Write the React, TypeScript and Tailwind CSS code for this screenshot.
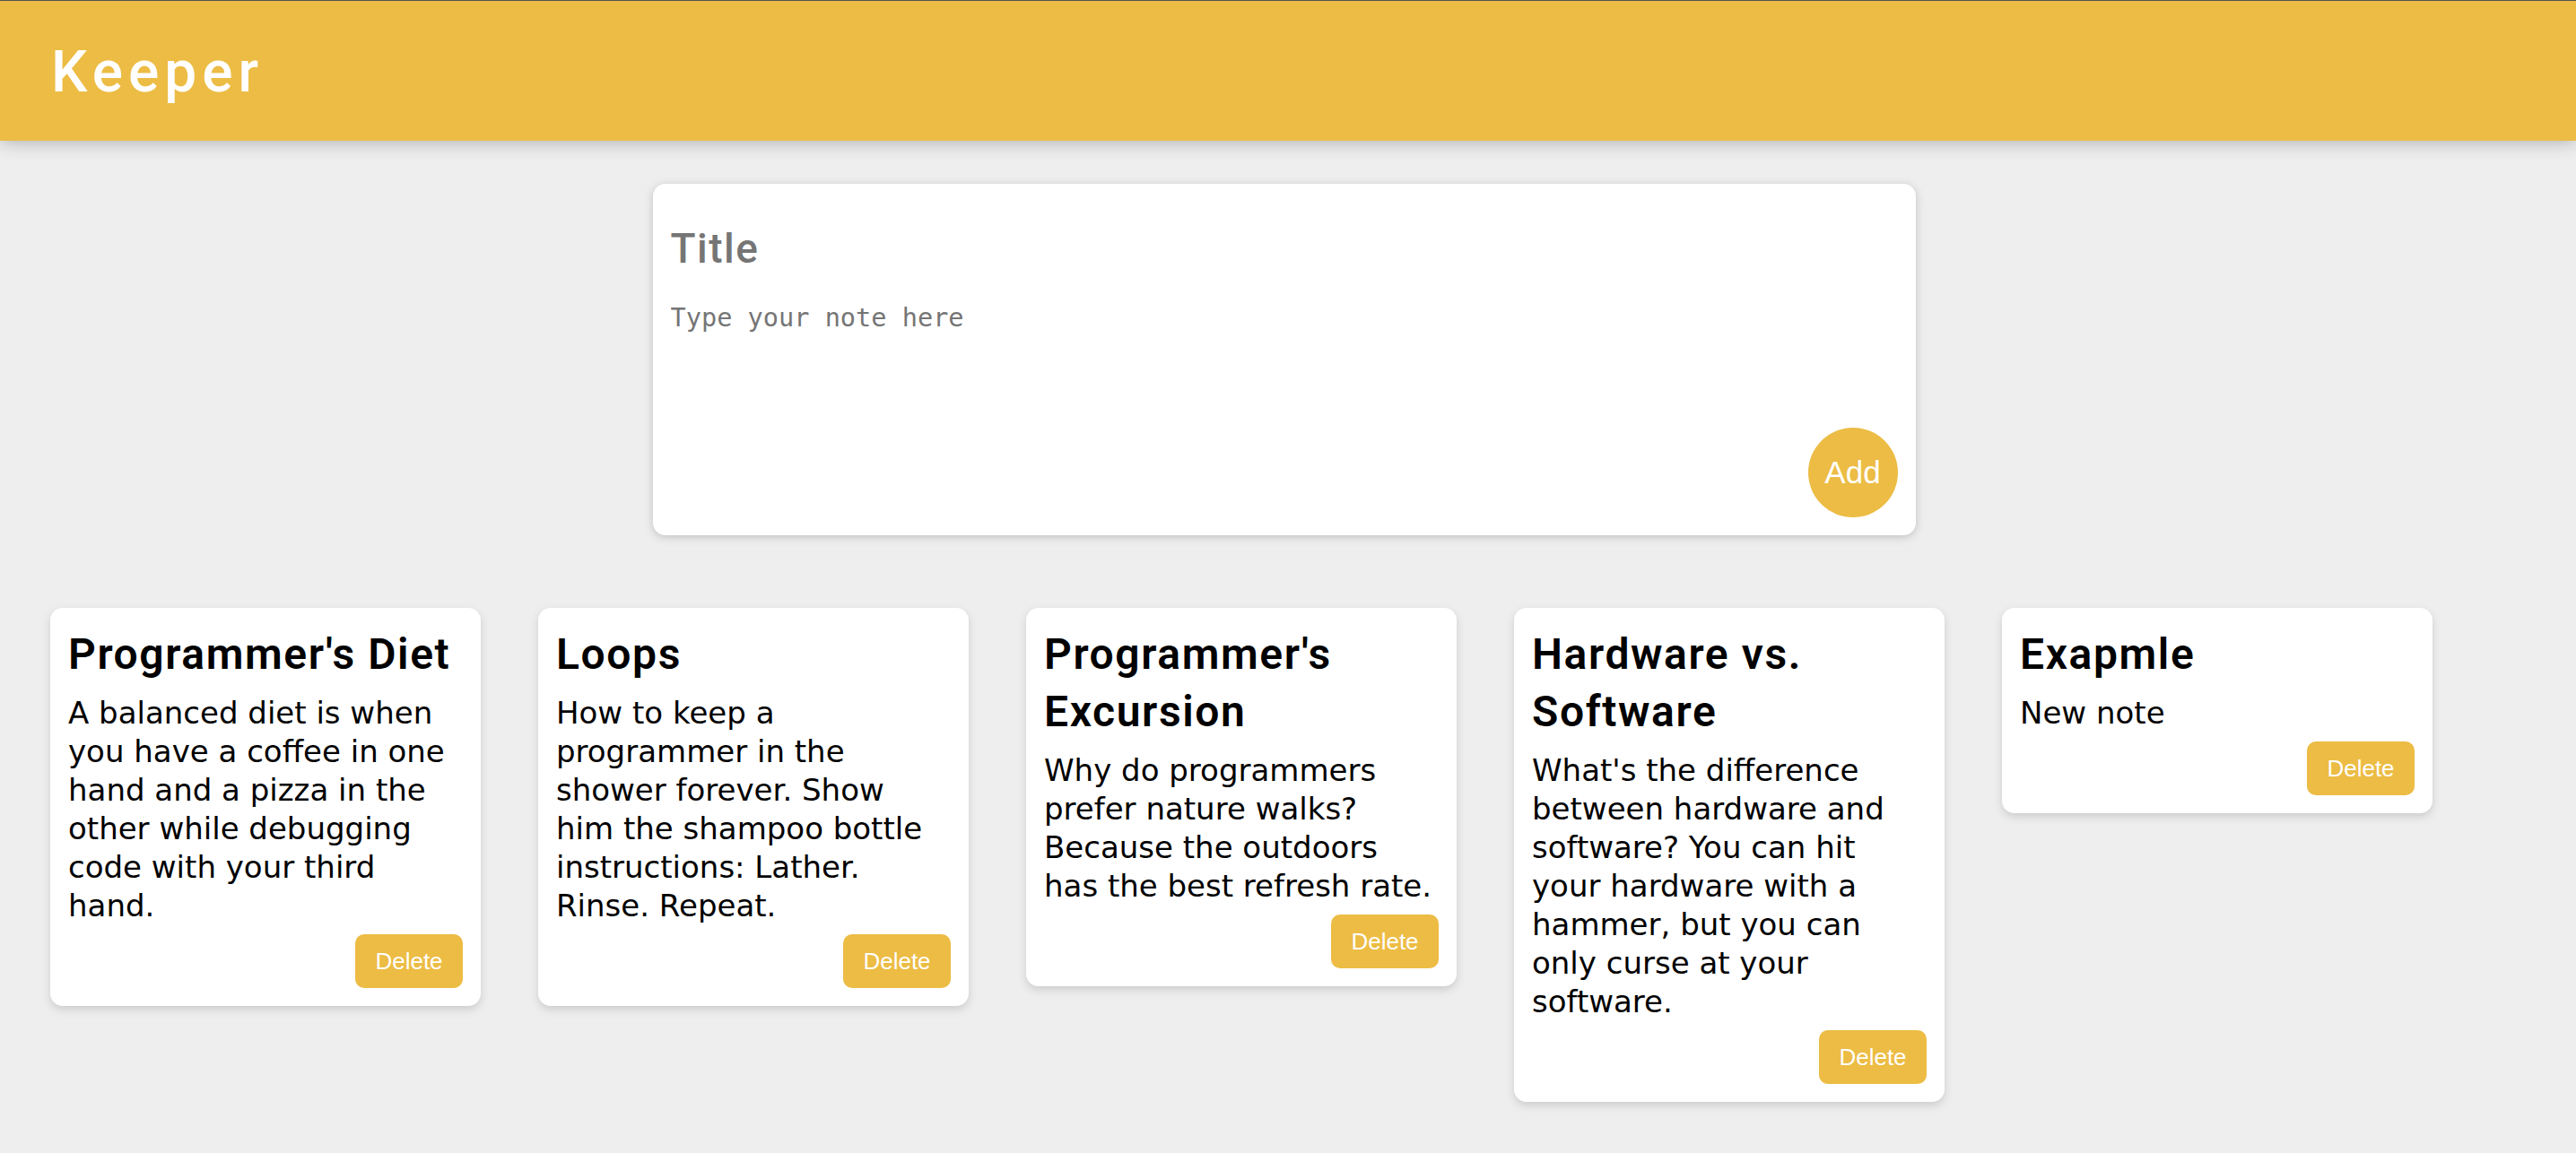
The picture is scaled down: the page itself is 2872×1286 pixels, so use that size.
import React, { useState } from 'react';

interface Note {
  title: string;
  content: string;
}

const initialNotes: Note[] = [
  {
    title: "Programmer's Diet",
    content:
      'A balanced diet is when you have a coffee in one hand and a pizza in the other while debugging code with your third hand.',
  },
  {
    title: 'Loops',
    content:
      'How to keep a programmer in the shower forever. Show him the shampoo bottle instructions: Lather. Rinse. Repeat.',
  },
  {
    title: "Programmer's Excursion",
    content:
      'Why do programmers prefer nature walks? Because the outdoors has the best refresh rate.',
  },
  {
    title: 'Hardware vs. Software',
    content:
      "What's the difference between hardware and software? You can hit your hardware with a hammer, but you can only curse at your software.",
  },
  { title: 'Exapmle', content: 'New note' },
];

const Header: React.FC = () => (
  <header className="relative z-10 h-[157px] border-t border-[#555555] bg-[#ecbc44] px-[57px] pt-[42px] shadow-[0_0_20px_rgba(0,0,0,0.3)]">
    <h1 className="font-['Roboto',sans-serif] text-[64px] leading-[75px] font-medium tracking-[6px] text-white">
      Keeper
    </h1>
  </header>
);

const CreateArea: React.FC<{ onAdd: (note: Note) => void }> = ({ onAdd }) => {
  const [note, setNote] = useState<Note>({ title: '', content: '' });

  function submit(e: React.FormEvent) {
    e.preventDefault();
    onAdd(note);
    setNote({ title: '', content: '' });
  }

  return (
    <div className="flex justify-center pr-[9px] pt-[48px]">
      <form
        onSubmit={submit}
        className="flex w-[1408px] flex-col rounded-[14px] bg-white px-[20px] pt-[40px] pb-[20px] shadow-[0_2px_10px_rgba(138,137,137,0.45)]"
      >
        <input
          name="title"
          value={note.title}
          onChange={(e) => setNote({ ...note, title: e.target.value })}
          placeholder="Title"
          className="h-[64px] font-['Roboto',sans-serif] text-[46px] font-medium tracking-[1.5px] text-black outline-none placeholder:text-[#757575]"
        />
        <textarea
          name="content"
          value={note.content}
          onChange={(e) => setNote({ ...note, content: e.target.value })}
          placeholder="Type your note here"
          className="mt-[25px] h-[143px] resize-none font-['DejaVu_Sans_Mono',monospace] text-[28.6px] leading-[40px] text-black outline-none placeholder:text-[#757575]"
        />
        <div className="flex justify-end">
          <button
            type="submit"
            className="flex h-[100px] w-[100px] items-center justify-center rounded-full bg-[#ecbc44] font-['Liberation_Sans',Arial,sans-serif] text-[35px] text-white"
          >
            Add
          </button>
        </div>
      </form>
    </div>
  );
};

const NoteCard: React.FC<{ note: Note; onDelete: () => void }> = ({ note, onDelete }) => (
  <div className="flex w-[480px] flex-col rounded-[14px] bg-white p-[20px] shadow-[0_4px_10px_#cccccc]">
    <h1 className="mb-[12px] font-['Roboto',sans-serif] text-[48px] leading-[64px] font-semibold tracking-[1.6px] text-black">
      {note.title}
    </h1>
    <p className="mb-[10px] pr-[2px] font-['DejaVu_Sans',sans-serif] text-[34px] leading-[43px] text-black">
      {note.content}
    </p>
    <div className="flex justify-end">
      <button
        onClick={onDelete}
        className="h-[60px] w-[120px] rounded-[10px] bg-[#ecbc44] font-['Liberation_Sans',Arial,sans-serif] text-[26px] text-white"
      >
        Delete
      </button>
    </div>
  </div>
);

export default function App() {
  const [notes, setNotes] = useState<Note[]>(initialNotes);

  return (
    <div className="min-h-screen bg-[#eeeeee]">
      <Header />
      <CreateArea onAdd={(n) => setNotes([...notes, n])} />
      <div className="mt-[81px] flex flex-wrap items-start gap-[64px] pl-[56px]">
        {notes.map((note, index) => (
          <NoteCard
            key={index}
            note={note}
            onDelete={() => setNotes(notes.filter((_, i) => i !== index))}
          />
        ))}
      </div>
    </div>
  );
}
